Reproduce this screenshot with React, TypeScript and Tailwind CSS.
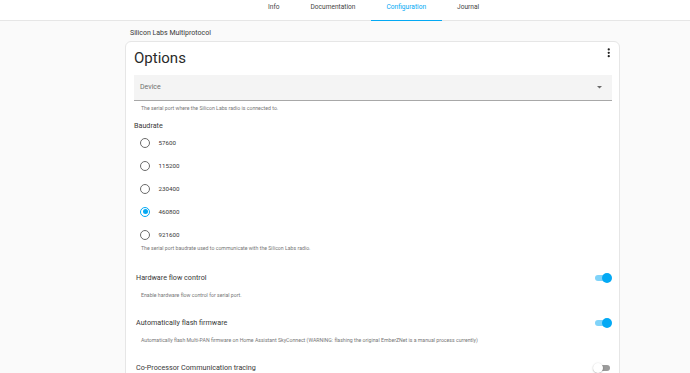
const tabs = [
  { label: 'Info', active: false },
  { label: 'Documentation', active: false },
  { label: 'Configuration', active: true },
  { label: 'Journal', active: false },
];

const baudrates = ['57600', '115200', '230400', '460800', '921600'];

function Radio({ checked }: { checked: boolean }) {
  return (
    <span
      className={`flex h-[10px] w-[10px] items-center justify-center rounded-full border-[1.3px] ${
        checked ? 'border-[#03a9f4]' : 'border-[#6b6b6b]'
      }`}
    >
      {checked && <span className="h-[5px] w-[5px] rounded-full bg-[#03a9f4]" />}
    </span>
  );
}

function Toggle({ on }: { on: boolean }) {
  return (
    <span className="relative block h-[10px] w-[17px]">
      <span
        className={`absolute left-0 top-[2.3px] h-[5.5px] w-[15px] rounded-full ${
          on ? 'bg-[#80d3f9]' : 'bg-[#9b9b9b]'
        }`}
      />
      <span
        className={`absolute top-0 h-[10px] w-[10px] rounded-full ${
          on ? 'left-[7px] bg-[#03a9f4]' : 'left-[-2px] bg-white shadow-[0_0.5px_1.5px_rgba(0,0,0,0.35)]'
        }`}
      />
    </span>
  );
}

function ToggleSection({ title, help, on }: { title: string; help?: string; on: boolean }) {
  return (
    <div className="h-[45px]">
      <div className="flex h-[10px] items-center justify-between pl-[2px]">
        <span className="text-[7.2px] leading-[10px] text-[#383838]">{title}</span>
        <Toggle on={on} />
      </div>
      {help && <div className="mt-[7.6px] pl-[7px] text-[5.2px] leading-[8px] text-[#777]">{help}</div>}
    </div>
  );
}

export default function App() {
  return (
    <div className="h-[373px] w-[690px] overflow-hidden bg-[#fafafa] font-['Roboto','Liberation_Sans',sans-serif]">
      {/* Top tab bar */}
      <div className="flex h-[21px] border-b border-[#e6e6e6] bg-white pl-[252.5px]">
        {tabs.map((t) => (
          <div
            key={t.label}
            className={`relative flex h-[20px] items-start px-[15.5px] pt-[2.5px] text-[6.6px] leading-[8px] ${
              t.active ? 'text-[#03a9f4]' : 'text-[#444]'
            }`}
          >
            {t.label}
            {t.active && <span className="absolute bottom-[-1px] left-0 right-0 h-[1.5px] bg-[#03a9f4]" />}
          </div>
        ))}
      </div>

      <div className="ml-[125px] w-[495px]">
        <div className="pl-[5px] pt-[6.7px] text-[7px] leading-[10px] text-[#383838]">Silicon Labs Multiprotocol</div>

        <div className="mt-[3.3px] h-[400px] rounded-[6px] border border-[#e6e6e6] bg-white pl-[8px] pr-[7px]">
          {/* Card header */}
          <div className="flex items-start justify-between pt-[6px]">
            <span className="h-[20px] text-[15px] leading-[20px] text-[#2a2a2a]">Options</span>
            <svg viewBox="0 0 24 24" className="-mr-[3px] -mt-[2.3px] h-[13.5px] w-[13.5px] fill-[#212121]">
              <path d="M12 16a2 2 0 0 1 2 2 2 2 0 0 1-2 2 2 2 0 0 1-2-2 2 2 0 0 1 2-2m0-6a2 2 0 0 1 2 2 2 2 0 0 1-2 2 2 2 0 0 1-2-2 2 2 0 0 1 2-2m0-6a2 2 0 0 1 2 2 2 2 0 0 1-2 2 2 2 0 0 1-2-2 2 2 0 0 1 2-2Z" />
            </svg>
          </div>

          {/* Device select */}
          <div className="mt-[7px] flex h-[26px] items-center justify-between border-b border-[#a8a8a8] bg-[#f4f4f4] pl-[6px] pr-[10px]">
            <span className="text-[7px] leading-[10px] text-[#707070]">Device</span>
            <svg viewBox="0 0 10 5" className="h-[2.5px] w-[5px] fill-[#6a6a6a]">
              <path d="M0 0h10L5 5Z" />
            </svg>
          </div>
          <div className="pl-[7px] pt-[2.7px] text-[5.2px] leading-[8px] text-[#777]">
            The serial port where the Silicon Labs radio is connected to.
          </div>

          {/* Baudrate */}
          <div className="mt-[9.5px] text-[7.2px] leading-[10px] text-[#383838]">Baudrate</div>
          <div className="flex flex-col">
            {baudrates.map((b) => (
              <div key={b} className="flex h-[23px] items-center gap-[8.5px] pl-[6px]">
                <Radio checked={b === '460800'} />
                <span className="text-[6.2px] leading-[8px] text-[#383838]">{b}</span>
              </div>
            ))}
          </div>
          <div className="-mt-[2px] pl-[7px] text-[5.2px] leading-[8px] text-[#777]">
            The serial port baudrate used to communicate with the Silicon Labs radio.
          </div>

          <div className="mt-[21px]">
            <ToggleSection title="Hardware flow control" help="Enable hardware flow control for serial port." on />
            <ToggleSection
              title="Automatically flash firmware"
              help="Automatically flash Multi-PAN firmware on Home Assistant SkyConnect (WARNING: flashing the original EmberZNet is a manual process currently)"
              on
            />
            <ToggleSection title="Co-Processor Communication tracing" on={false} />
          </div>
        </div>
      </div>
    </div>
  );
}
